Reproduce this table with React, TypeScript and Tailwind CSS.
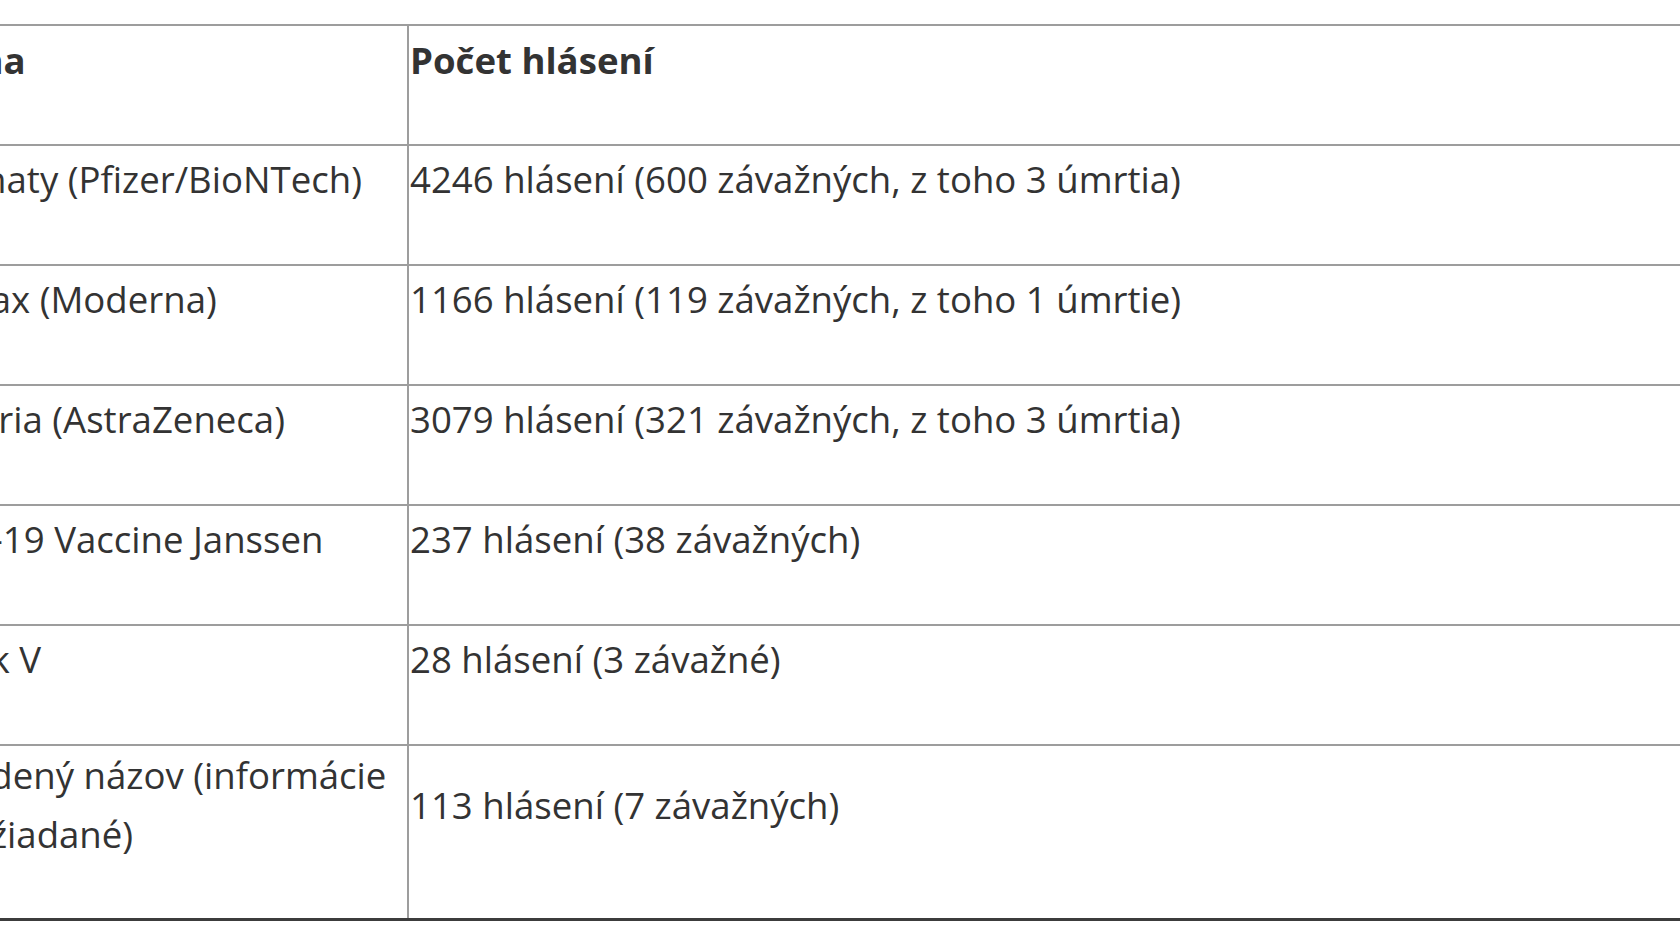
import React from 'react';

const rows = [
  { name: 'Comirnaty (Pfizer/BioNTech)', count: '4246 hlásení (600 závažných, z toho 3 úmrtia)' },
  { name: 'Spikevax (Moderna)', count: '1166 hlásení (119 závažných, z toho 1 úmrtie)' },
  { name: 'Vaxzevria (AstraZeneca)', count: '3079 hlásení (321 závažných, z toho 3 úmrtia)' },
  { name: 'COVID-19 Vaccine Janssen', count: '237 hlásení (38 závažných)' },
  { name: 'Sputnik V', count: '28 hlásení (3 závažné)' },
];

export default function App() {
  return (
    <div className="min-h-screen w-full overflow-hidden bg-white pt-[24px] font-['Open_Sans',sans-serif] text-[36.6px] leading-[59px] text-[#333333]">
      <div className="-ml-[121px] w-[1900px] border-t-2 border-[#9d9d9d]">
        {/* Header */}
        <div className="grid h-[120px] grid-cols-[530px_1fr] border-b-2 border-[#9d9d9d]">
          <div className="border-r-2 border-[#9d9d9d] pl-[2px] pt-[5px] font-bold">Vakcína</div>
          <div className="pl-[1px] pt-[5px] font-bold">Počet hlásení</div>
        </div>

        {rows.map((r) => (
          <div key={r.name} className="grid h-[120px] grid-cols-[530px_1fr] border-b-2 border-[#9d9d9d]">
            <div className="border-r-2 border-[#9d9d9d] pl-[2px] pt-[4px]">{r.name}</div>
            <div className="pl-[1px] pt-[4px]">{r.count}</div>
          </div>
        ))}

        {/* Last row, two lines on the left */}
        <div className="grid h-[175px] grid-cols-[530px_1fr] border-b-[3px] border-[#3c3c3c]">
          <div className="border-r-2 border-[#9d9d9d] pl-[2px] pr-[10px] pt-0">
            Neuvedený názov (informácie boli vyžiadané)
          </div>
          <div className="pl-[1px] pt-[30px]">113 hlásení (7 závažných)</div>
        </div>
      </div>
    </div>
  );
}
